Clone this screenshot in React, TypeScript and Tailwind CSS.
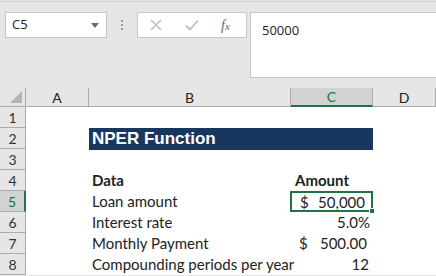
import { Fragment } from "react";

type Row = {
  n: number;
  b?: string;
  bold?: boolean;
  c?: React.ReactNode;
  banner?: string;
};

const body = { fontFamily: "Lato, 'Liberation Sans', sans-serif" };

function Acct({ value }: { value: string }) {
  return (
    <div className="flex w-full justify-between pl-[8px] pr-[6px]">
      <span>$</span>
      <span>{value}</span>
    </div>
  );
}

const rows: Row[] = [
  { n: 1 },
  { n: 2, banner: "NPER Function" },
  { n: 3 },
  { n: 4, b: "Data", bold: true, c: <span className="pl-[4px] font-bold">Amount</span> },
  { n: 5, b: "Loan amount", c: <Acct value="50,000" /> },
  { n: 6, b: "Interest rate", c: <span className="ml-auto pr-[3px]">5.0%</span> },
  { n: 7, b: "Monthly Payment", c: <Acct value="500.00" /> },
  { n: 8, b: "Compounding periods per year", c: <span className="ml-auto pr-[4px]">12</span> },
];

export default function App() {
  return (
    <div className="w-[436px] h-[276px] overflow-hidden bg-[#e6e6e6] text-[#222]" style={body}>
      <div className="h-px mt-px bg-[#d4d4d4]" />

      {/* formula bar */}
      <div className="flex items-start pt-[10px] h-[86px]">
        <div className="ml-[5px] w-[102px] h-[26px] bg-white border border-[#c6c6c6] flex items-center justify-between pl-[6px] pr-[7px]">
          <span className="text-[13px] text-[#222]" style={{ fontFamily: "'Open Sans', sans-serif" }}>C5</span>
          <svg width="8" height="5" viewBox="0 0 8 5"><path d="M0 0h8L4 5z" fill="#6b6b6b" /></svg>
        </div>
        <div className="w-[30px] h-[26px] flex flex-col items-center justify-center gap-[2px]">
          <div className="w-[2px] h-[2px] bg-[#9a9a9a]" />
          <div className="w-[2px] h-[2px] bg-[#9a9a9a]" />
          <div className="w-[2px] h-[2px] bg-[#9a9a9a]" />
        </div>
        <div className="w-[110px] h-[26px] bg-white border border-[#c6c6c6] flex items-center">
          <svg width="12" height="12" viewBox="0 0 12 12" className="ml-[12px]">
            <path d="M1 1l10 10M11 1L1 11" stroke="#bdbdbd" strokeWidth="1.5" />
          </svg>
          <svg width="14" height="12" viewBox="0 0 14 12" className="ml-[23px]">
            <path d="M1 6.5l4 4L13 1.5" stroke="#bdbdbd" strokeWidth="1.8" fill="none" />
          </svg>
          <span
            className="ml-[22px] italic text-[14px] text-[#666]"
            style={{ fontFamily: "'Liberation Serif', serif" }}
          >
            f<span className="text-[11px]">x</span>
          </span>
        </div>
        <div className="ml-[3px] flex-1 h-[66px] bg-white border border-[#c6c6c6] border-r-0 pl-[11px] pt-[4px]">
          <span className="text-[13px] text-[#222]" style={{ fontFamily: "'Open Sans', sans-serif" }}>50000</span>
        </div>
      </div>

      {/* sheet */}
      <div className="grid grid-cols-[26px_63px_202px_82px_63px] grid-rows-[19px] auto-rows-[21px] bg-white">
        {/* header row */}
        <div className="bg-[#e6e6e6] border-r border-b border-[#ababab] flex items-end justify-end pr-[3px] pb-[3px]">
          <svg width="12" height="12" viewBox="0 0 12 12"><path d="M12 0v12H0z" fill="#b4b4b4" /></svg>
        </div>
        {["A", "B", "C", "D"].map((col) => (
          <div
            key={col}
            className={
              col === "C"
                ? "bg-[#d2d2d2] border-r border-[#ababab] border-b-2 border-b-[#217346] flex items-center justify-center text-[14px] text-[#217346]"
                : "bg-[#e6e6e6] border-r border-b border-[#ababab] flex items-center justify-center text-[14px] text-[#222]"
            }
          >
            {col}
          </div>
        ))}

        {rows.map((r) => (
          <Fragment key={r.n}>
            <div
              className={
                r.n === 5
                  ? "bg-[#d2d2d2] border-b border-[#ababab] border-r-2 border-r-[#217346] flex items-center justify-center text-[14px] text-[#217346]"
                  : "bg-[#e6e6e6] border-r border-b border-[#ababab] flex items-center justify-center text-[14px] text-[#333]"
              }
            >
              {r.n}
            </div>
            <div />
            {r.banner ? (
              <div className="col-span-2 h-[22px] bg-[#17375e] flex items-center pl-[3px]">
                <span
                  className="text-white font-bold text-[17px] leading-[22px] whitespace-nowrap"
                  style={{ fontFamily: "'Liberation Sans', Arial, sans-serif" }}
                >
                  {r.banner}
                </span>
              </div>
            ) : (
              <>
                <div
                  className={`flex items-end pb-[1px] pl-[3px] text-[15px] leading-[20px] whitespace-nowrap ${r.bold ? "font-bold" : ""}`}
                >
                  {r.b}
                </div>
                <div
                  className={
                    r.n === 5
                      ? "relative -ml-px flex items-center text-[15px] leading-[20px] border-2 border-[#217346] whitespace-nowrap"
                      : "flex items-end pb-[1px] text-[15px] leading-[20px] whitespace-nowrap"
                  }
                >
                  {r.c}
                  {r.n === 5 && (
                    <div className="absolute -right-[4px] -bottom-[4px] w-[6px] h-[6px] bg-[#217346] border border-white" />
                  )}
                </div>
              </>
            )}
            <div />
          </Fragment>
        ))}
      </div>
    </div>
  );
}
